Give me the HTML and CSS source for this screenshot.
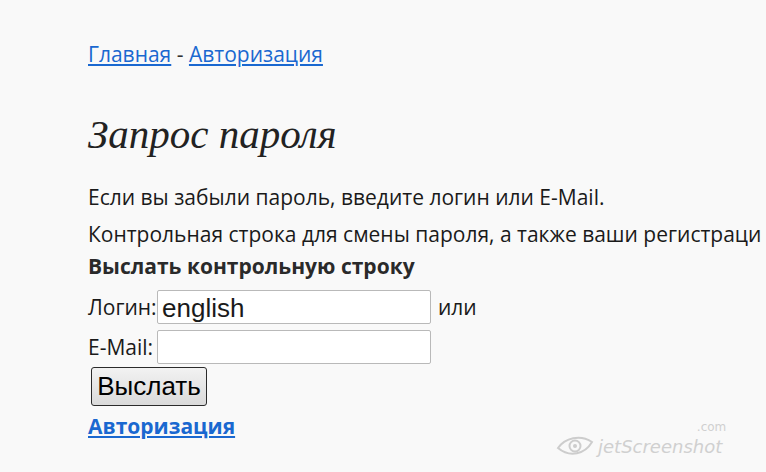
FILE: index.html
```html
<!DOCTYPE html>
<html lang="ru">
<head>
<meta charset="utf-8">
<title>Запрос пароля</title>
<link rel="stylesheet" href="styles.css">
</head>
<body>
<div class="page">
  <div class="crumbs"><a href="#">Главная</a> - <a href="#">Авторизация</a></div>
  <h1 class="title">Запрос пароля</h1>
  <p class="p1">Если вы забыли пароль, введите логин или E-Mail.</p>
  <p class="p2">Контрольная строка для смены пароля, а также ваши регистраци</p>
  <p class="p3">Выслать контрольную строку</p>
  <div class="row row1">
    <span class="label">Логин:</span><input class="field" type="text" value="english"><span class="or">или</span>
  </div>
  <div class="row row2">
    <span class="label">E-Mail:</span><input class="field" type="text" value="">
  </div>
  <button class="btn" type="button">Выслать</button>
  <a class="auth" href="#">Авторизация</a>
</div>
<div class="watermark">
  <svg class="wm-eye" width="38" height="24" viewBox="0 0 38 24">
    <path d="M2 14 C9 4 24 0 36 8 C29 20 14 24 2 14 Z" fill="none" stroke="#cdcdcd" stroke-width="2"/>
    <circle cx="19" cy="12" r="5.5" fill="none" stroke="#cdcdcd" stroke-width="2"/>
    <circle cx="19" cy="12" r="2" fill="#cdcdcd"/>
  </svg>
  <span class="wm-text">jetScreenshot</span>
  <span class="wm-com">.com</span>
</div>
</body>
</html>
```

FILE: styles.css
```css
html, body {
  margin: 0;
  padding: 0;
}
body {
  background: #f9f9f9;
  font-family: "Open Sans", "Noto Sans", sans-serif;
  font-size: 21px;
  color: #1a1a1a;
  width: 766px;
  height: 472px;
  overflow: hidden;
  position: relative;
}
.page {
  padding: 40px 0 0 88px;
  white-space: nowrap;
}
a {
  color: #1a68d0;
  text-decoration: underline;
}
.crumbs {
  line-height: 28px;
  color: #333;
}
.title {
  margin: 44px 0 0 0;
  font-family: "Liberation Serif", serif;
  font-style: italic;
  font-weight: normal;
  font-size: 41px;
  line-height: 44px;
  color: #222;
}
p {
  margin: 0;
  line-height: 28px;
}
.p1 { margin-top: 27px; }
.p2 { margin-top: 9px; }
.p3 { margin-top: 4px; font-weight: bold; color: #2a2a2a; }
.row {
  display: flex;
  align-items: center;
  height: 34px;
}
.row1 { margin-top: 10px; }
.row2 { margin-top: 6px; }
.label {
  width: 69px;
  flex: none;
  overflow: visible;
}
.field {
  box-sizing: border-box;
  width: 274px;
  height: 34px;
  margin: 0;
  padding: 2px 4px 0 4px;
  border: 1px solid #b9b9b9;
  border-radius: 2px;
  background: #fff;
  font-family: "Liberation Sans", Arial, sans-serif;
  font-size: 26px;
  color: #1a1a1a;
}
.or {
  margin-left: 7px;
}
.btn {
  display: block;
  box-sizing: border-box;
  margin: 3px 0 0 3px;
  width: 116px;
  height: 39px;
  padding: 0;
  border: 1px solid #2b2b2b;
  border-radius: 3px;
  background: linear-gradient(#f2f2f2, #dadada);
  font-family: "Liberation Sans", Arial, sans-serif;
  font-size: 26px;
  color: #000;
}
.auth {
  display: block;
  margin-top: 6px;
  line-height: 28px;
  font-weight: bold;
  width: max-content;
}
.watermark {
  position: absolute;
  left: 556px;
  top: 434px;
  display: flex;
  align-items: center;
  gap: 4px;
  color: #d0d0d0;
}
.wm-text {
  font-family: "DejaVu Sans", sans-serif;
  font-style: italic;
  font-size: 18px;
}
.wm-com {
  position: absolute;
  right: -4px;
  top: -13px;
  font-family: "DejaVu Sans", sans-serif;
  font-size: 12px;
  line-height: 12px;
}
```
